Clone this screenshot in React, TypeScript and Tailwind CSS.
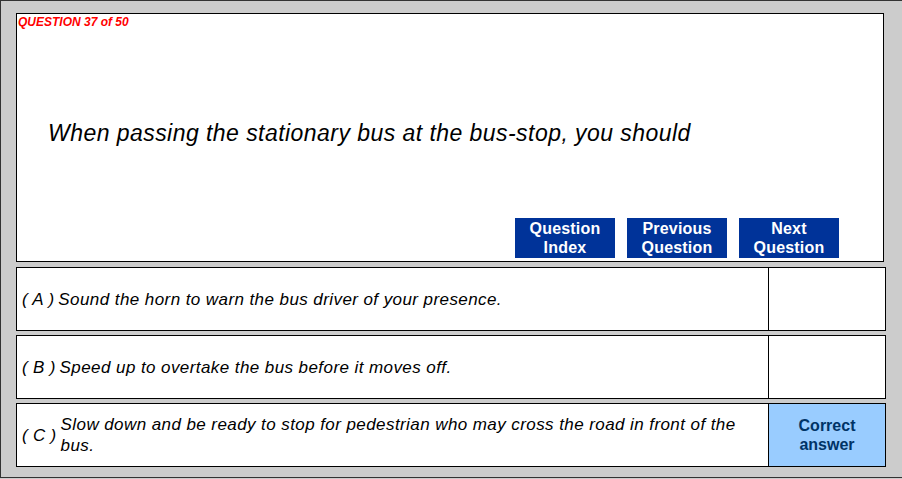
const options = [
  { key: 'A', text: 'Sound the horn to warn the bus driver of your presence.', correct: false },
  { key: 'B', text: 'Speed up to overtake the bus before it moves off.', correct: false },
  {
    key: 'C',
    text: 'Slow down and be ready to stop for pedestrian who may cross the road in front of the bus.',
    correct: true,
  },
];

const buttons = [
  ['Question', 'Index'],
  ['Previous', 'Question'],
  ['Next', 'Question'],
];

export default function App() {
  return (
    <div className="w-[902px] h-[479px] bg-[#cccccc] font-['Liberation_Sans',Arial,sans-serif]">
      <div className="h-[478px] border-t border-l border-b border-[#333333] pl-[15px] pt-[12px]">
        {/* question panel */}
        <div className="w-[868px] h-[249px] bg-white border border-black flex flex-col">
          <div className="pl-[1px] pt-[1px] text-[12px] leading-[14px] font-bold italic text-[#ff0000]">
            QUESTION 37 of 50
          </div>
          <div className="pl-[31px] mt-[91px] text-[23px] leading-[26px] tracking-[0.45px] italic text-black">
            When passing the stationary bus at the bus-stop, you should
          </div>
          <div className="mt-auto mb-[3px] ml-[498px] flex gap-[12px]">
            {buttons.map(([a, b]) => (
              <button
                key={a + b}
                className="w-[100px] h-[40px] bg-[#003399] text-white font-bold text-[16px] leading-[19px] tracking-[0.2px] flex flex-col items-center justify-center"
              >
                <span>{a}</span>
                <span>{b}</span>
              </button>
            ))}
          </div>
        </div>

        {/* answer rows */}
        <div className="mt-[5px] flex flex-col gap-[4px]">
          {options.map((o) => (
            <div key={o.key} className="w-[870px] h-[64px] bg-white border border-black flex">
              <div className="w-[752px] flex items-center pl-[5px] pr-[24px] text-[17px] leading-[21px] tracking-[0.42px] italic text-black border-r border-black">
                <span className="shrink-0 mr-[4px] tracking-[0.3px]">( {o.key} )</span>
                <span>{o.text}</span>
              </div>
              <div
                className={
                  'flex-1 flex flex-col items-center justify-center text-[16px] leading-[19px] font-bold text-[#003366] ' +
                  (o.correct ? 'bg-[#99ccff]' : 'bg-white')
                }
              >
                {o.correct && (
                  <>
                    <span>Correct</span>
                    <span>answer</span>
                  </>
                )}
              </div>
            </div>
          ))}
        </div>
      </div>
    </div>
  );
}
